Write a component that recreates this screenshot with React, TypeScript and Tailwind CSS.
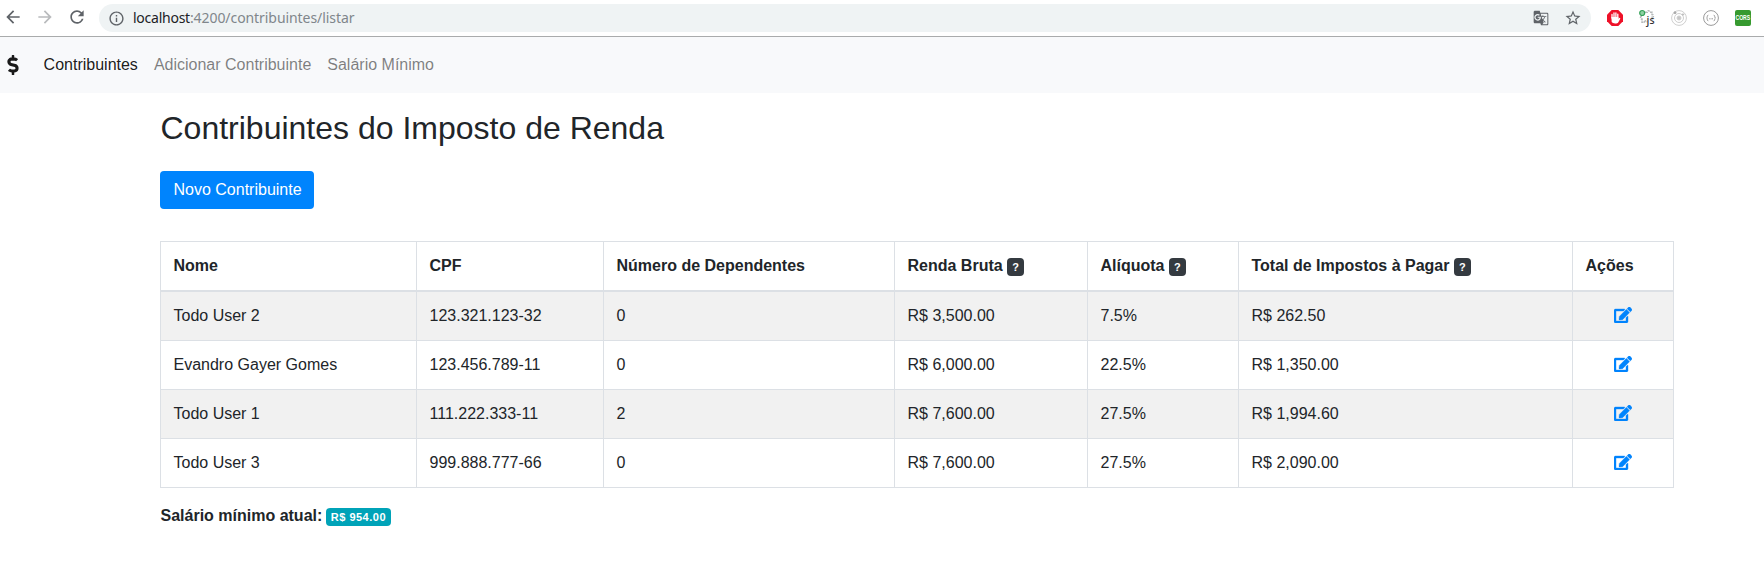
import { FaDollarSign, FaEdit } from 'react-icons/fa';
import { MdArrowBack, MdArrowForward, MdRefresh, MdInfoOutline, MdStarBorder, MdGTranslate } from 'react-icons/md';

const rows = [
  ['Todo User 2', '123.321.123-32', '0', 'R$ 3,500.00', '7.5%', 'R$ 262.50'],
  ['Evandro Gayer Gomes', '123.456.789-11', '0', 'R$ 6,000.00', '22.5%', 'R$ 1,350.00'],
  ['Todo User 1', '111.222.333-11', '2', 'R$ 7,600.00', '27.5%', 'R$ 1,994.60'],
  ['Todo User 3', '999.888.777-66', '0', 'R$ 7,600.00', '27.5%', 'R$ 2,090.00'],
];

const headers = [
  { label: 'Nome' },
  { label: 'CPF' },
  { label: 'Número de Dependentes' },
  { label: 'Renda Bruta', help: true },
  { label: 'Alíquota', help: true },
  { label: 'Total de Impostos à Pagar', help: true },
  { label: 'Ações' },
];

function HelpBadge() {
  return (
    <span className="inline-block w-[17px] rounded bg-[#343a40] py-[3px] text-center align-baseline text-[11px] leading-[12px] font-bold text-white">
      ?
    </span>
  );
}

function BrowserBar() {
  return (
    <div className="flex h-[37px] items-start border-b border-[#a9abac] bg-white pl-[3px]">
      <div className="flex h-[34px] items-center text-[#5f6368]">
        <MdArrowBack className="size-5" />
        <MdArrowForward className="ml-3 size-5 text-[#b9bbbd]" />
        <MdRefresh className="ml-3 size-5" />
      </div>
      <div className="mt-1 ml-3 flex h-7 w-[1492px] items-center rounded-full bg-[#eff3f4] pr-[9px] pl-[9px] text-[#5f6368]">
        <MdInfoOutline className="size-[17px]" />
        <span className="ml-2 flex-1 font-['Noto_Sans',sans-serif] text-[14px] tracking-[-0.07px] text-[#80868b]">
          <span className="tracking-[-0.25px] text-[#202124]">localhost</span>:4200/contribuintes/listar
        </span>
        <MdGTranslate className="size-4" />
        <MdStarBorder className="ml-[15px] size-[18px]" />
      </div>
      <div className="flex h-9 items-center gap-4 pl-4">
        <svg className="size-4" viewBox="0 0 16 16">
          <path d="M4.7 0h6.6L16 4.7v6.6L11.3 16H4.7L0 11.3V4.7z" fill="#ee1128" />
          <path d="M5 8V4.4M7 7V3M8.9 7V2.8M10.8 8V4.2" stroke="#fff" strokeWidth="1.3" strokeLinecap="round" />
          <path d="M4.4 7h7v1.8l1.1-1.1.9.7-2.2 4c-.8 1.4-5.7 1.4-6.5-.3z" fill="#fff" />
        </svg>
        <svg className="size-4 overflow-visible" viewBox="0 0 16 16">
          <path
            d="M6 2.2h2.2c0-2 2.6-2 2.6 0H13v2.4c2 0 2 2.6 0 2.6v2.6M3 6.2c-2 0-2 2.8 0 2.8v3.2h2.4c0-1.8 2.4-1.8 2.4 0"
            fill="none"
            stroke="#b6babb"
            strokeWidth="1.5"
            strokeDasharray="2.4 .8"
          />
          <circle cx="3.2" cy="3" r="2.5" fill="#8fd0a2" stroke="#35a259" strokeWidth="1.2" />
          <text x="7.6" y="14" fontFamily="Noto Sans" fontSize="10.5" fontWeight="500" fill="#333">js</text>
        </svg>
        <svg className="size-4" viewBox="0 0 16 16" fill="none" stroke="#cfcfcf">
          <circle cx="8" cy="8" r="7.4" />
          <circle cx="8" cy="8" r="4.5" />
          <circle cx="8" cy="8" r="2" fill="#c6c6c6" />
          <circle cx="4" cy="2.7" r="1" fill="#aaa" stroke="#aaa" />
          <circle cx="12" cy="4.5" r=".7" fill="#bbb" stroke="#bbb" />
        </svg>
        <svg className="size-4" viewBox="0 0 16 16" fill="none" stroke="#999">
          <circle cx="8" cy="8" r="7.4" />
          <path d="M5.3 5.2q-1 0-1 1.2T3.5 8q.8.4.8 1.6t1 1.2M10.7 5.2q1 0 1 1.2t.8 1.6q-.8.4-.8 1.6t-1 1.2" />
          <path d="M6.2 8.8h3.8" strokeDasharray="1 .4" />
        </svg>
        <div className="flex size-4 items-center justify-center rounded-[2px] bg-[#369a2f]">
          <span className="scale-x-[0.68] font-['Liberation_Sans',sans-serif] text-[7.5px] leading-4 font-bold text-white">CORS</span>
        </div>
      </div>
    </div>
  );
}

export default function App() {
  return (
    <div className="h-[562px] overflow-hidden bg-white font-['Liberation_Sans',Arial,sans-serif] text-[16px] leading-6 text-[#212529]">
      <BrowserBar />
      <nav className="flex h-14 items-center bg-[#f8f9fb] text-black/50">
        <FaDollarSign className="ml-[3px] size-5 text-black/90" />
        <a className="ml-[20.6px] text-black/90">Contribuintes</a>
        <a className="ml-4">Adicionar Contribuinte</a>
        <a className="ml-4">Salário Mínimo</a>
      </nav>
      <main className="ml-40 w-[1514px] pt-4">
        <h2 className="pl-[0.5px] text-[32px] leading-[38.4px]">Contribuintes do Imposto de Renda</h2>
        <button className="mt-[23.6px] block h-[38px] rounded bg-[#0084fd] pr-[12.5px] pl-[13.5px] text-white">Novo Contribuinte</button>
        <table className="mt-8 w-[1514px] table-fixed border-collapse border border-[#dce0e5]">
          <colgroup>
            <col className="w-[256px]" />
            <col className="w-[187px]" />
            <col className="w-[291px]" />
            <col className="w-[193px]" />
            <col className="w-[151px]" />
            <col className="w-[334px]" />
            <col className="w-[101px]" />
          </colgroup>
          <thead>
            <tr>
              {headers.map((h) => (
                <th key={h.label} className="border border-b-2 border-[#dce0e5] py-3 pr-0 pl-[12.5px] text-left align-bottom font-bold whitespace-nowrap">
                  {h.label} {h.help && <HelpBadge />}
                </th>
              ))}
            </tr>
          </thead>
          <tbody>
            {rows.map((row) => (
              <tr key={row[1]} className="odd:bg-[#f1f1f1]">
                {row.map((cell, i) => (
                  <td key={i} className="border border-[#dce0e5] py-3 pr-3 pl-[12.5px]">{cell}</td>
                ))}
                <td className="border border-[#dce0e5] px-3 pt-[11px] pb-[13px]">
                  <FaEdit className="mx-auto h-4 w-[18px] stroke-[#0084fd] stroke-[12px] text-[#0084fd]" />
                </td>
              </tr>
            ))}
          </tbody>
        </table>
        <p className="mt-4 pl-[0.5px] font-bold">
          Salário mínimo atual:{' '}
          <span className="-ml-px inline-block w-[65px] rounded bg-[#00a3b8] py-[3px] pl-[5px] align-baseline text-[11px] leading-[12px] tracking-[0.5px] whitespace-nowrap text-white">R$ 954.00</span>
        </p>
      </main>
    </div>
  );
}
